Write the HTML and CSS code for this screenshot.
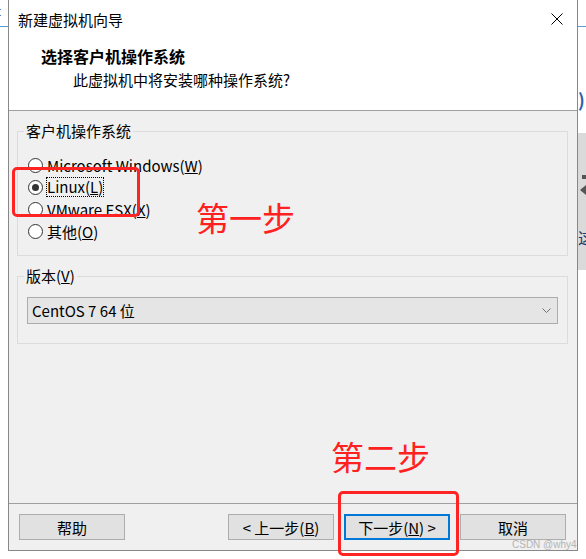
FILE: index.html
```html
<!DOCTYPE html>
<html lang="zh-CN">
<head>
  <meta charset="UTF-8">
  <title>新建虚拟机向导</title>
  <link rel="stylesheet" href="styles.css">
</head>
<body>
  <div class="desktop">
    <div class="edge edge-left">
      <span class="edge-glyph">t</span>
      <div class="edge-line"></div>
    </div>

    <div class="wizard">
      <div class="titlebar">
        <span>新建虚拟机向导</span>
        <svg class="close" width="12" height="12" viewBox="0 0 12 12">
          <path d="M0.5 0.5L11.5 11.5M11.5 0.5L0.5 11.5" stroke="#000" stroke-width="1"/>
        </svg>
      </div>

      <div class="header">
        <div class="header-title">选择客户机操作系统</div>
        <div class="header-sub">此虚拟机中将安装哪种操作系统?</div>
      </div>

      <div class="content">
        <fieldset class="group group-os">
          <legend>客户机操作系统</legend>
          <label class="radio"><span class="dot"></span><span>Microsoft Windows(<u>W</u>)</span></label>
          <label class="radio checked"><span class="dot"></span><span class="focus">Linux(<u>L</u>)</span></label>
          <label class="radio"><span class="dot"></span><span>VMware ESX(<u>X</u>)</span></label>
          <label class="radio"><span class="dot"></span><span>其他(<u>O</u>)</span></label>
        </fieldset>

        <fieldset class="group group-version">
          <legend>版本(<u>V</u>)</legend>
          <div class="select">
            <span>CentOS 7 64 位</span>
            <svg class="chevron" width="9" height="5" viewBox="0 0 9 5">
              <path d="M0.5 0.5L4.5 4.5L8.5 0.5" fill="none" stroke="#707070" stroke-width="1"/>
            </svg>
          </div>
        </fieldset>

        <div class="footer">
          <button class="btn help">帮助</button>
          <button class="btn">&lt; 上一步(<u>B</u>)</button>
          <button class="btn primary">下一步(<u>N</u>) &gt;</button>
          <button class="btn">取消</button>
        </div>
      </div>
    </div>

    <div class="edge edge-right">
      <div class="edge-line"></div>
      <div class="edge-paren">)</div>
      <div class="edge-panel">
        <div class="edge-square"></div>
        <div class="edge-arrow"></div>
        <div class="edge-char">这</div>
      </div>
    </div>

    <!-- annotations drawn over the dialog -->
    <div class="mark mark-1"></div>
    <div class="note note-1">第一步</div>
    <div class="note note-2">第二步</div>
    <div class="mark mark-2"></div>
    <div class="watermark">CSDN @why4</div>
  </div>
</body>
</html>
```

FILE: styles.css
```css
body {
  margin: 0;
  font-family: "Noto Sans CJK SC", "Noto Sans", sans-serif;
  font-size: 15px;
  color: #000;
  background: #fff;
}
.desktop {
  position: relative;
  display: flex;
  align-items: flex-start;
  width: 586px;
  height: 559px;
  overflow: hidden;
}

/* background window edges */
.edge {
  width: 8px;
  flex: none;
  overflow: hidden;
  height: 559px;
}
.edge-left {
  position: relative;
}
.edge-glyph {
  display: block;
  height: 26px;
  margin-left: -4px;
  font-size: 13px;
  line-height: 22px;
  color: #333;
}
.edge-line {
  height: 1px;
  background: #5b9bd5;
}
.edge-right .edge-line {
  margin-top: 26px;
}
.edge-paren {
  margin-top: 62px;
  height: 20px;
  line-height: 20px;
  font-size: 18px;
  font-weight: bold;
  color: #2b5fa8;
}
.edge-panel {
  margin-top: 24px;
  height: 137px;
  background: #dadada;
  overflow: hidden;
}
.edge-square {
  width: 4px;
  height: 4px;
  margin: 42px 0 0 4px;
  background: #555;
}
.edge-arrow {
  width: 0;
  height: 0;
  margin: 6px 0 0 2px;
  border-top: 5px solid transparent;
  border-bottom: 5px solid transparent;
  border-right: 6px solid #555;
}
.edge-char {
  margin-top: 33px;
  font-size: 16px;
  line-height: 18px;
  color: #1a3a6a;
}

/* dialog */
.wizard {
  width: 570px;
  height: 551px;
  flex: none;
  box-sizing: border-box;
  border: 1px solid #888;
  border-top: none;
  background: #f0f0f0;
  display: flex;
  flex-direction: column;
}
.titlebar {
  height: 38px;
  display: flex;
  align-items: center;
  padding: 0 14px 0 9px;
  background: #fff;
}
.titlebar .close {
  margin-left: auto;
}
.header {
  height: 73px;
  box-sizing: border-box;
  padding: 6px 0 0 32px;
  background: #fff;
  border-bottom: 1px solid #a0a0a0;
}
.header-title {
  font-size: 16px;
  font-weight: bold;
  line-height: 24px;
}
.header-sub {
  padding-left: 32px;
  line-height: 24px;
}
.content {
  flex: 1;
  display: flex;
  flex-direction: column;
}
.group {
  margin: 10px 9px 0 8px;
  border: 1px solid #dcdcdc;
  min-width: 0;
}
.group legend {
  padding: 0 2px;
  margin-left: -3px;
  line-height: 20px;
}
.group-os {
  padding: 13px 9px 13px;
}
.group-version {
  padding: 11px 9px 19px;
}
.radio {
  display: flex;
  align-items: center;
  height: 22px;
}
.dot {
  position: relative;
  width: 15px;
  height: 15px;
  box-sizing: border-box;
  margin: 0 4px 0 1px;
  border: 1px solid #333;
  border-radius: 50%;
  background: #fff;
}
.radio.checked .dot::after {
  content: "";
  position: absolute;
  left: 3px;
  top: 3px;
  width: 7px;
  height: 7px;
  border-radius: 50%;
  background: #333;
}
.focus {
  outline: 1px dotted #000;
  line-height: 18px;
}
.select {
  height: 27px;
  box-sizing: border-box;
  display: flex;
  align-items: center;
  justify-content: space-between;
  padding: 0 6px 0 4px;
  border: 1px solid #acacac;
  background: #e5e5e5;
}
.footer {
  margin-top: auto;
  display: flex;
  gap: 10px;
  padding: 10px 11px 10px 10px;
  border-top: 1px solid #a0a0a0;
}
.btn {
  width: 106px;
  height: 26px;
  box-sizing: border-box;
  display: flex;
  align-items: center;
  justify-content: center;
  padding: 0;
  border: 1px solid #adadad;
  background: #e1e1e1;
  color: #000;
  font: inherit;
  font-size: 15px;
}
.btn.help {
  margin-right: auto;
}
.btn.primary {
  border: 2px solid #0078d7;
}

/* red annotations */
.mark {
  position: absolute;
  border: 3px solid #ff2424;
  border-radius: 5px;
}
.mark-1 {
  left: 12px;
  top: 167px;
  width: 122px;
  height: 44px;
}
.mark-2 {
  left: 338px;
  top: 491px;
  width: 115px;
  height: 59px;
}
.note {
  position: absolute;
  color: #ff2020;
  font-size: 33px;
  line-height: 1;
}
.note-1 {
  left: 196px;
  top: 201px;
}
.note-2 {
  left: 331px;
  top: 440px;
}
.watermark {
  position: absolute;
  left: 512px;
  top: 539px;
  font-family: "Liberation Sans", sans-serif;
  font-size: 10px;
  line-height: 12px;
  color: #b4b4b4;
}
```
